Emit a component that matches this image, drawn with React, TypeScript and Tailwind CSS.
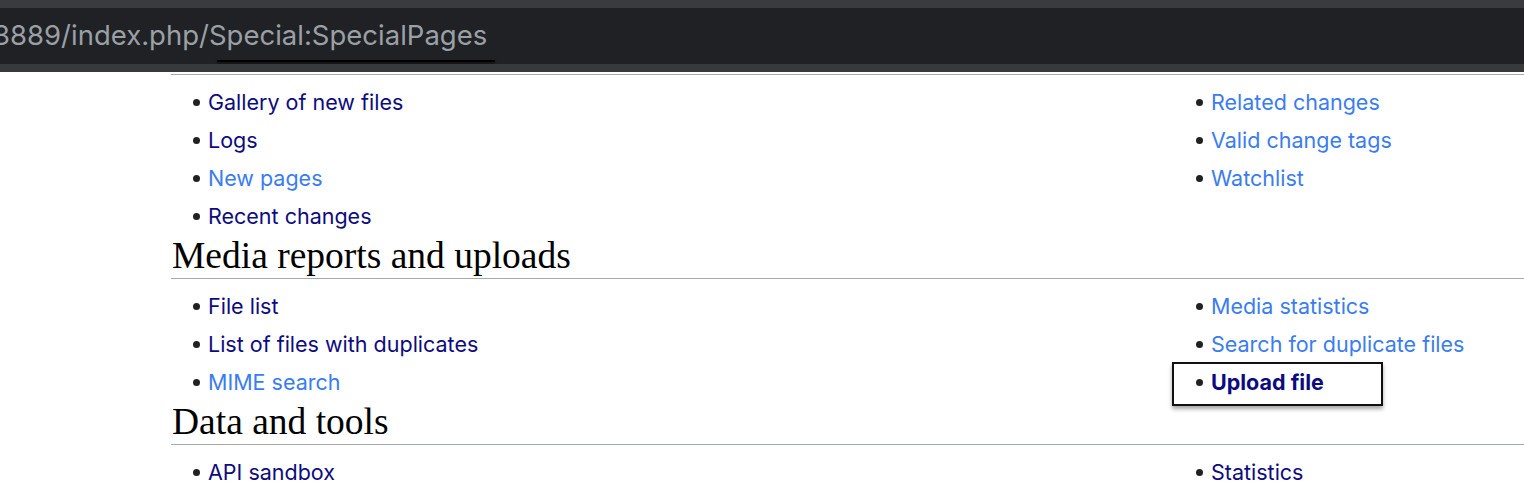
import React from 'react';

type Item = { label: string; tone: 'visited' | 'link' | 'bold'; boxed?: boolean };

const sans = { fontFamily: 'Inter, "Liberation Sans", Arial, sans-serif' };

function Bullet({ item }: { item: Item }) {
  const color =
    item.tone === 'link' ? 'text-[#3a7cf2]' : item.tone === 'bold' ? 'text-[#0d0b80] font-bold' : 'text-[#0d0b80]';
  return (
    <li className="relative flex items-center h-[38px]">
      {item.boxed && (
        <span className="absolute left-[-24px] top-[-1px] w-[211px] h-[44px] border-2 border-[#111] shadow-[0_3px_4px_rgba(0,0,0,0.35)]" />
      )}
      <span className="w-[7px] h-[7px] rounded-full bg-[#202122] mr-[8px] mt-[1px]" />
      <span className={`text-[21.5px] ${color}`}>{item.label}</span>
    </li>
  );
}

function Column({ items }: { items: Item[] }) {
  return (
    <ul className="pl-[22px]">
      {items.map((it) => (
        <Bullet key={it.label} item={it} />
      ))}
    </ul>
  );
}

function Section({ title, left, right }: { title?: string; left: Item[]; right: Item[] }) {
  return (
    <div>
      {title && (
        <h2
          className="h-[44px] flex items-end pb-[4px] pl-[1px] text-[37.5px] leading-none text-black border-b border-[#a2a9b1]"
          style={{ fontFamily: '"Liberation Serif", Georgia, serif' }}
        >
          {title}
        </h2>
      )}
      <div className="grid grid-cols-[1003px_1fr] pt-[8px]">
        <Column items={left} />
        <Column items={right} />
      </div>
    </div>
  );
}

export default function App() {
  return (
    <div className="w-[1524px] h-[482px] overflow-hidden bg-white" style={sans}>
      <div className="h-[8px] bg-[#3a3b3f]" />
      <div className="relative h-[56px] bg-[#202124] flex items-center overflow-hidden">
        <span className="ml-[-7px] text-[27.5px] text-[#9aa0a6] whitespace-nowrap">
          3889/index.php/Special:SpecialPages
        </span>
        <span className="absolute left-[217px] top-[52px] w-[278px] h-[2px] bg-black shadow-[0_2px_3px_rgba(0,0,0,0.6)]" />
      </div>
      <div className="h-[8px] bg-[#38393d]" />
      <div className="ml-[171px] mt-[2px] border-t border-[#a2a9b1]">
        <Section
          left={[
            { label: 'Gallery of new files', tone: 'visited' },
            { label: 'Logs', tone: 'visited' },
            { label: 'New pages', tone: 'link' },
            { label: 'Recent changes', tone: 'visited' },
          ]}
          right={[
            { label: 'Related changes', tone: 'link' },
            { label: 'Valid change tags', tone: 'link' },
            { label: 'Watchlist', tone: 'link' },
          ]}
        />
        <Section
          title="Media reports and uploads"
          left={[
            { label: 'File list', tone: 'visited' },
            { label: 'List of files with duplicates', tone: 'visited' },
            { label: 'MIME search', tone: 'link' },
          ]}
          right={[
            { label: 'Media statistics', tone: 'link' },
            { label: 'Search for duplicate files', tone: 'link' },
            { label: 'Upload file', tone: 'bold', boxed: true },
          ]}
        />
        <Section
          title="Data and tools"
          left={[{ label: 'API sandbox', tone: 'visited' }]}
          right={[{ label: 'Statistics', tone: 'visited' }]}
        />
      </div>
    </div>
  );
}
